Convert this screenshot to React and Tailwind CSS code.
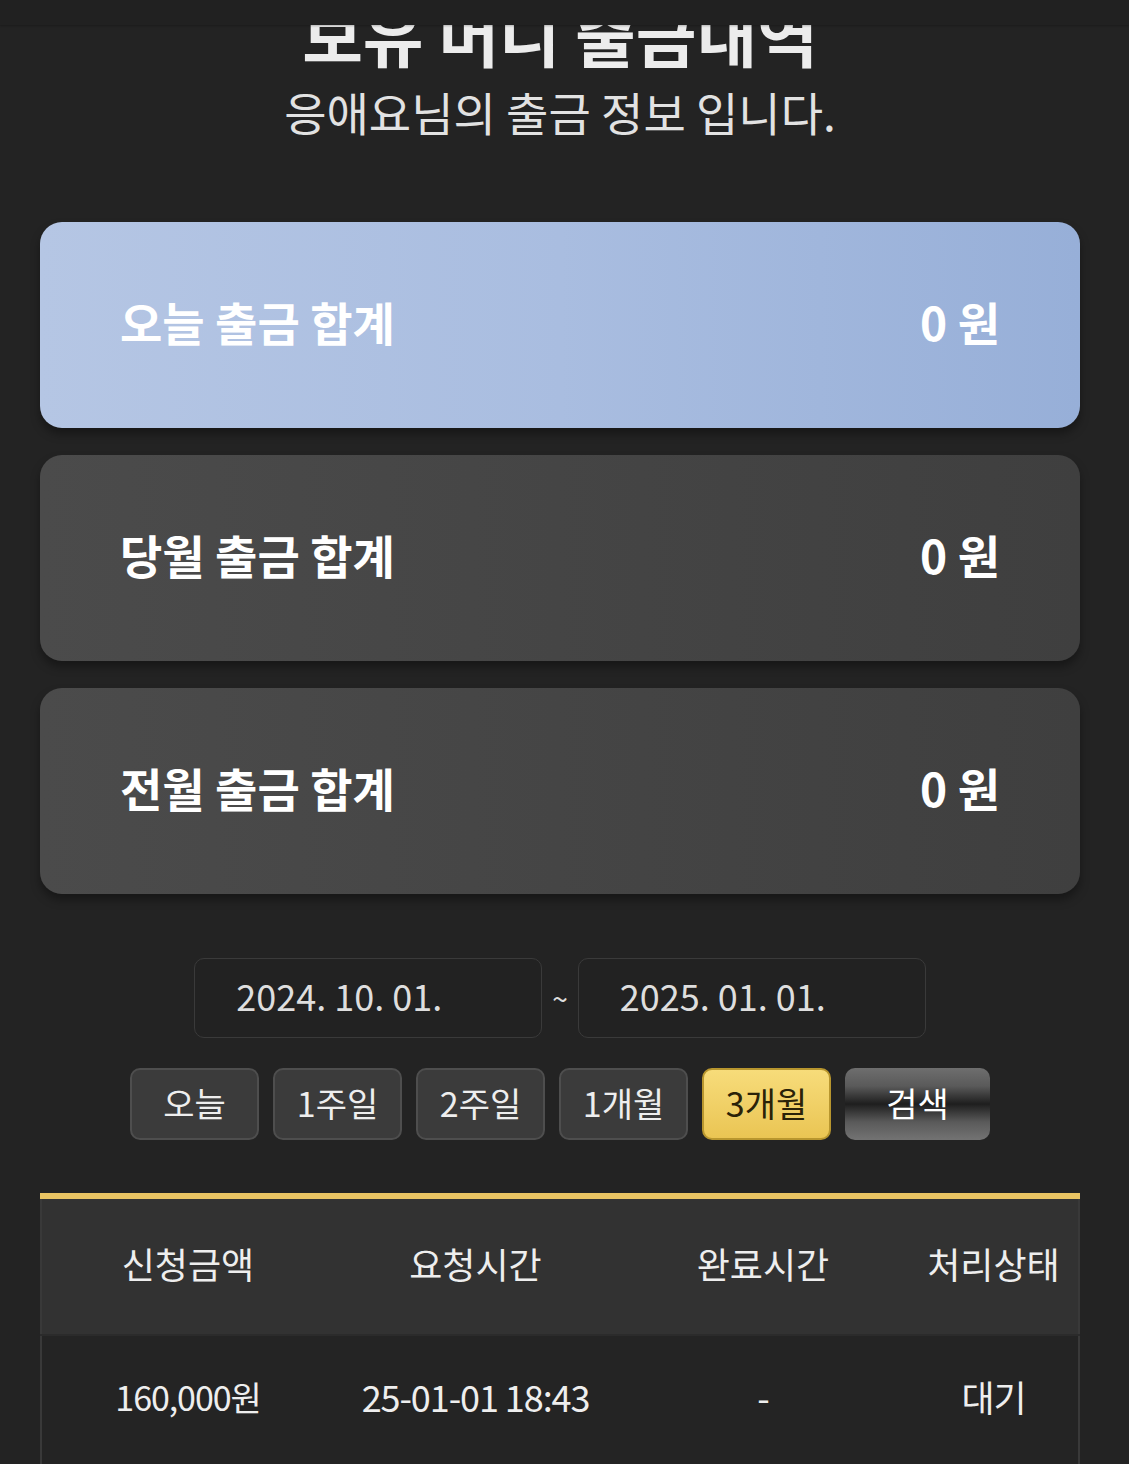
export default function App() {
  const font = { fontFamily: '"Noto Sans CJK KR", "Noto Sans", sans-serif' };
  const periods = ["오늘", "1주일", "2주일", "1개월"];
  return (
    <div className="relative min-h-[1464px] w-full overflow-hidden bg-[#232323] text-white" style={font}>
      <div className="absolute left-0 right-0 top-0 z-10 h-[25px] bg-[#212121] shadow-[0_1px_2px_rgba(0,0,0,0.25)]" />
      <div className="w-[1120px]">
        <div className="flex flex-col items-center pt-0">
          <h1 className="text-[66px] font-bold leading-none text-[#ececec]">보유 머니 출금내역</h1>
          <p className="mt-[22px] text-[46px] leading-none text-[#e2e2e2]">응애요님의 출금 정보 입니다.</p>
        </div>

        <div className="mt-[88px] flex flex-col gap-[27px] px-[40px]">
          <SumCard label="오늘 출금 합계" className="bg-gradient-to-r from-[#b5c6e4] via-[#a9bde0] to-[#97afd8]" />
          <SumCard label="당월 출금 합계" className="bg-gradient-to-r from-[#4b4b4b] to-[#3f3f3f]" />
          <SumCard label="전월 출금 합계" className="bg-gradient-to-r from-[#4b4b4b] to-[#3f3f3f]" />
        </div>

        <div className="mt-[64px] flex items-center justify-center gap-[10px]">
          <div className="flex h-[80px] w-[348px] items-center rounded-[10px] border border-[#3a3a3a] bg-[#222222] pb-[6px] pl-[41px] text-[36px] text-[#dedede]">2024. 10. 01.</div>
          <span className="text-[28px] text-[#dddddd]">~</span>
          <div className="flex h-[80px] w-[348px] items-center rounded-[10px] border border-[#3a3a3a] bg-[#222222] pb-[6px] pl-[41px] text-[36px] text-[#dedede]">2025. 01. 01.</div>
        </div>

        <div className="mt-[30px] flex items-center justify-center gap-[14px]">
          {periods.map((p) => (
            <button key={p} className="flex h-[72px] w-[129px] items-center justify-center rounded-[10px] border-2 border-[#4e4e4e] bg-[#3b3b3b] pb-[4px] text-[34px] text-[#eeeeee]">
              {p}
            </button>
          ))}
          <button className="flex h-[72px] w-[129px] items-center justify-center rounded-[10px] border-2 border-[#b8962e] bg-gradient-to-b from-[#f7dc7a] to-[#eac553] pb-[4px] text-[34px] text-[#2a2208]">
            3개월
          </button>
          <button className="flex h-[72px] w-[145px] items-center justify-center rounded-[10px] bg-[linear-gradient(to_bottom,#6e6e6e_0%,#5a5a5a_25%,#1e1e1e_50%,#5a5a5a_75%,#737373_100%)] pb-[4px] text-[34px] text-white">
            검색
          </button>
        </div>

        <div className="mx-[40px] mt-[53px] border-t-[6px] border-[#e9c463]">
          <div className="grid h-[135px] grid-cols-[292px_283px_292px_1fr] items-center border-x-2 border-[#393939] bg-[#323232] pb-[8px] text-center text-[36px] text-[#eeeeee]">
            <div>신청금액</div>
            <div>요청시간</div>
            <div>완료시간</div>
            <div>처리상태</div>
          </div>
          <div className="h-[2px] bg-[#2b2b2b]" />
          <div className="grid h-[130px] grid-cols-[292px_283px_292px_1fr] items-center border-x-2 border-[#393939] bg-[#242424] pb-[10px] text-center text-[36px] tracking-[-0.03em] text-[#eeeeee]">
            <div className="text-[34px]">160,000원</div>
            <div>25-01-01 18:43</div>
            <div>-</div>
            <div>대기</div>
          </div>
        </div>
      </div>
    </div>
  );
}

function SumCard({ label, className }) {
  return (
    <div className={`flex h-[206px] items-center justify-between rounded-[22px] px-[80px] pb-[8px] shadow-[0_6px_10px_rgba(0,0,0,0.35)] ${className}`}>
      <span className="text-[46px] font-bold leading-none text-white">{label}</span>
      <span className="text-[46px] font-bold leading-none text-white">0 원</span>
    </div>
  );
}
